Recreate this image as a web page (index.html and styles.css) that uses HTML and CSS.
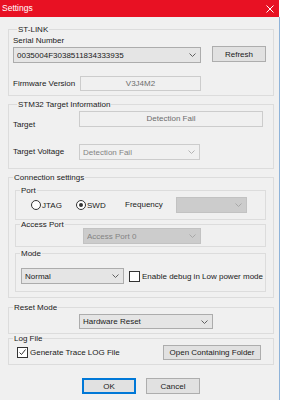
FILE: index.html
```html
<!DOCTYPE html>
<html lang="en">
<head>
    <meta charset="UTF-8">
    <meta name="viewport" content="width=device-width, initial-scale=1.0">
    <title>Settings</title>
    <link rel="stylesheet" href="styles.css">
</head>
<body>
    <div class="window">
        <div class="titlebar">
            <span class="title">Settings</span>
            <svg class="close" width="8" height="8" viewBox="0 0 8 8">
                <path d="M0.5 0.5 L7.5 7.5 M7.5 0.5 L0.5 7.5" stroke="#fff" stroke-width="1"/>
            </svg>
        </div>

        <div class="client">
            <!-- ST-LINK -->
            <fieldset class="group stlink">
                <legend>ST-LINK</legend>
                <div class="label serial-label">Serial Number</div>
                <div class="row serial-row">
                    <div class="combo serial-combo">
                        <span class="combo-text">0035004F3038511834333935</span>
                        <svg class="arrow" width="7" height="4" viewBox="0 0 7 4"><polyline points="0.5,0.5 3.5,3.5 6.5,0.5" fill="none" stroke="#606060"/></svg>
                    </div>
                    <button class="btn refresh">Refresh</button>
                </div>
                <div class="row firmware-row">
                    <span class="label field-label">Firmware Version</span>
                    <div class="field firmware-field">V3J4M2</div>
                </div>
            </fieldset>

            <!-- STM32 Target Information -->
            <fieldset class="group target">
                <legend>STM32 Target Information</legend>
                <div class="row target-row">
                    <span class="label field-label target-label">Target</span>
                    <div class="field target-field">Detection Fail</div>
                </div>
                <div class="row voltage-row">
                    <span class="label field-label">Target Voltage</span>
                    <div class="combo combo-disabled voltage-combo">
                        <span class="combo-text">Detection Fail</span>
                        <svg class="arrow" width="7" height="4" viewBox="0 0 7 4"><polyline points="0.5,0.5 3.5,3.5 6.5,0.5" fill="none" stroke="#b4b4b4"/></svg>
                    </div>
                </div>
            </fieldset>

            <!-- Connection settings -->
            <fieldset class="group connection">
                <legend>Connection settings</legend>

                <fieldset class="group inner port">
                    <legend>Port</legend>
                    <div class="row port-row">
                        <label class="radio-item jtag"><span class="radio"></span>JTAG</label>
                        <label class="radio-item swd"><span class="radio checked"></span>SWD</label>
                        <span class="label freq-label">Frequency</span>
                        <div class="combo combo-locked freq-combo">
                            <span class="combo-text"></span>
                            <svg class="arrow" width="7" height="4" viewBox="0 0 7 4"><polyline points="0.5,0.5 3.5,3.5 6.5,0.5" fill="none" stroke="#a8a8a8"/></svg>
                        </div>
                    </div>
                </fieldset>

                <fieldset class="group inner access">
                    <legend>Access Port</legend>
                    <div class="combo combo-locked access-combo">
                        <span class="combo-text">Access Port 0</span>
                        <svg class="arrow" width="7" height="4" viewBox="0 0 7 4"><polyline points="0.5,0.5 3.5,3.5 6.5,0.5" fill="none" stroke="#a8a8a8"/></svg>
                    </div>
                </fieldset>

                <fieldset class="group inner mode">
                    <legend>Mode</legend>
                    <div class="row mode-row">
                        <div class="combo mode-combo">
                            <span class="combo-text">Normal</span>
                            <svg class="arrow" width="7" height="4" viewBox="0 0 7 4"><polyline points="0.5,0.5 3.5,3.5 6.5,0.5" fill="none" stroke="#606060"/></svg>
                        </div>
                        <label class="check-item lowpower"><span class="checkbox"></span>Enable debug in Low power mode</label>
                    </div>
                </fieldset>
            </fieldset>

            <!-- Reset Mode -->
            <fieldset class="group reset">
                <legend>Reset Mode</legend>
                <div class="combo reset-combo">
                    <span class="combo-text">Hardware Reset</span>
                    <svg class="arrow" width="7" height="4" viewBox="0 0 7 4"><polyline points="0.5,0.5 3.5,3.5 6.5,0.5" fill="none" stroke="#606060"/></svg>
                </div>
            </fieldset>

            <!-- Log File -->
            <fieldset class="group log">
                <legend>Log File</legend>
                <div class="row log-row">
                    <label class="check-item trace">
                        <span class="checkbox checked">
                            <svg width="9" height="9" viewBox="0 0 9 9"><polyline points="1.5,4.5 3.5,6.5 7.5,1.5" fill="none" stroke="#333" stroke-width="1"/></svg>
                        </span>Generate Trace LOG File
                    </label>
                    <button class="btn folder">Open Containing Folder</button>
                </div>
            </fieldset>

            <div class="buttons">
                <button class="btn ok">OK</button>
                <button class="btn">Cancel</button>
            </div>
        </div>
    </div>
</body>
</html>
```

FILE: styles.css
```css
/* General */
* {
    box-sizing: border-box;
}

body {
    margin: 0;
    background: #ffffff;
    font-family: "Liberation Sans", Arial, sans-serif;
    font-size: 8px;
    color: #1a1a1a;
}

.window {
    width: 280px;
    height: 400px;
    display: flex;
    flex-direction: column;
}

/* Title bar */
.titlebar {
    height: 17px;
    margin-right: 1px;
    background: #e81123;
    display: flex;
    align-items: center;
    padding-left: 2px;
}

.title {
    color: #fff;
    font-size: 8.5px;
    line-height: 17px;
}

.close {
    margin-left: auto;
    margin-right: 5px;
}

/* Client area */
.client {
    flex: 1;
    background: #f0f0f0;
    border-right: 1px solid #8fb3d9;
    padding: 0 5px 0 8px;
}

/* Group boxes */
.group {
    margin: 0;
    padding: 0;
    min-width: 0;
    border: 1px solid #dcdcdc;
}

.group legend {
    margin-left: 4px;
    padding: 0 1px;
    line-height: 9px;
    font-size: 8px;
}

.inner {
    margin: 0 7px 0 6px;
}

.row {
    display: flex;
    align-items: center;
}

.label {
    line-height: 10px;
    white-space: nowrap;
}

.field-label {
    width: 66px;
    flex: none;
}

/* Controls */
.combo {
    display: flex;
    align-items: center;
    height: 16px;
    padding: 0 4px 0 3px;
    background: #e5e5e5;
    border: 1px solid #acacac;
    flex: none;
}

.combo-text {
    flex: 1;
    white-space: nowrap;
    overflow: hidden;
}

.combo-disabled {
    background: #f0f0f0;
    border-color: #cccccc;
    color: #838383;
}

.combo-locked {
    background: #cccccc;
    border-color: #c2c2c2;
    color: #838383;
}

.field {
    height: 15px;
    line-height: 13px;
    border: 1px solid #cccccc;
    background: #f0f0f0;
    color: #6d6d6d;
    text-align: center;
    flex: none;
}

.btn {
    height: 16px;
    padding: 0;
    margin: 0;
    font-family: inherit;
    font-size: 8px;
    color: #1a1a1a;
    background: #e1e1e1;
    border: 1px solid #adadad;
    flex: none;
}

.btn.ok {
    border-color: #0078d7;
    box-shadow: inset 0 0 0 1px #0078d7;
}

.radio-item,
.check-item {
    display: flex;
    align-items: center;
    white-space: nowrap;
}

.radio {
    width: 10px;
    height: 10px;
    border: 1px solid #333;
    border-radius: 50%;
    background: #fff;
    margin-right: 1px;
    display: flex;
    align-items: center;
    justify-content: center;
}

.radio.checked::after {
    content: "";
    width: 4px;
    height: 4px;
    border-radius: 50%;
    background: #333;
}

.checkbox {
    width: 11px;
    height: 11px;
    border: 1px solid #333;
    background: #fff;
    margin-right: 2px;
    display: flex;
    align-items: center;
    justify-content: center;
    flex: none;
}

/* ST-LINK */
.stlink {
    margin-top: 8px;
    padding: 0 0 4px 4px;
}

.serial-label {
    margin-top: 2px;
}

.serial-row {
    align-items: flex-start;
    height: 16px;
}

.serial-combo {
    width: 188px;
    margin-top: 1px;
}

.refresh {
    width: 54px;
    margin-left: 11px;
}

.firmware-row {
    margin-top: 14px;
}

.firmware-field {
    width: 121px;
    margin-left: 1px;
}

/* STM32 target */
.target {
    margin-top: 4px;
    padding: 0 0 8px 4px;
}

.target-row {
    align-items: flex-start;
    margin-top: 2px;
}

.target-label {
    margin-top: 9px;
}

.target-field {
    width: 184px;
    height: 16px;
    line-height: 14px;
}

.voltage-row {
    margin-top: 14px;
}

.voltage-combo {
    width: 121px;
}

/* Connection settings */
.connection {
    margin-top: 4px;
    padding-bottom: 5px;
}

.port {
    margin-top: 4px;
    padding-bottom: 6px;
}

.port-row {
    margin-top: 2px;
    padding-left: 15px;
}

.jtag {
    width: 45px;
}

.swd {
    width: 49px;
}

.freq-label {
    width: 51px;
}

.freq-combo {
    width: 71px;
}

.access {
    padding: 0 0 2px 67px;
}

.access legend {
    margin-left: -63px;
}

.access-combo {
    width: 118px;
    margin-top: -1px;
}

.mode {
    margin-top: 2px;
    padding: 0 0 7px 5px;
}

.mode legend {
    margin-left: -1px;
}

.mode-row {
    margin-top: 10px;
}

.mode-combo {
    width: 103px;
}

.lowpower {
    margin-left: 5px;
}

/* Reset mode */
.reset {
    margin-top: 5px;
    padding: 0 0 4px 70px;
}

.reset legend {
    margin-left: -66px;
}

.reset-combo {
    width: 134px;
    height: 15px;
    margin-top: 2px;
}

/* Log file */
.log {
    padding-bottom: 4px;
}

.log-row {
    margin-top: 2px;
    height: 15px;
    padding: 0 12px 0 8px;
}

.folder {
    width: 98px;
    height: 15px;
    margin-left: auto;
}

/* Dialog buttons */
.buttons {
    display: flex;
    justify-content: center;
    gap: 10px;
    margin-top: 13px;
}

.buttons .btn {
    width: 54px;
}
```
